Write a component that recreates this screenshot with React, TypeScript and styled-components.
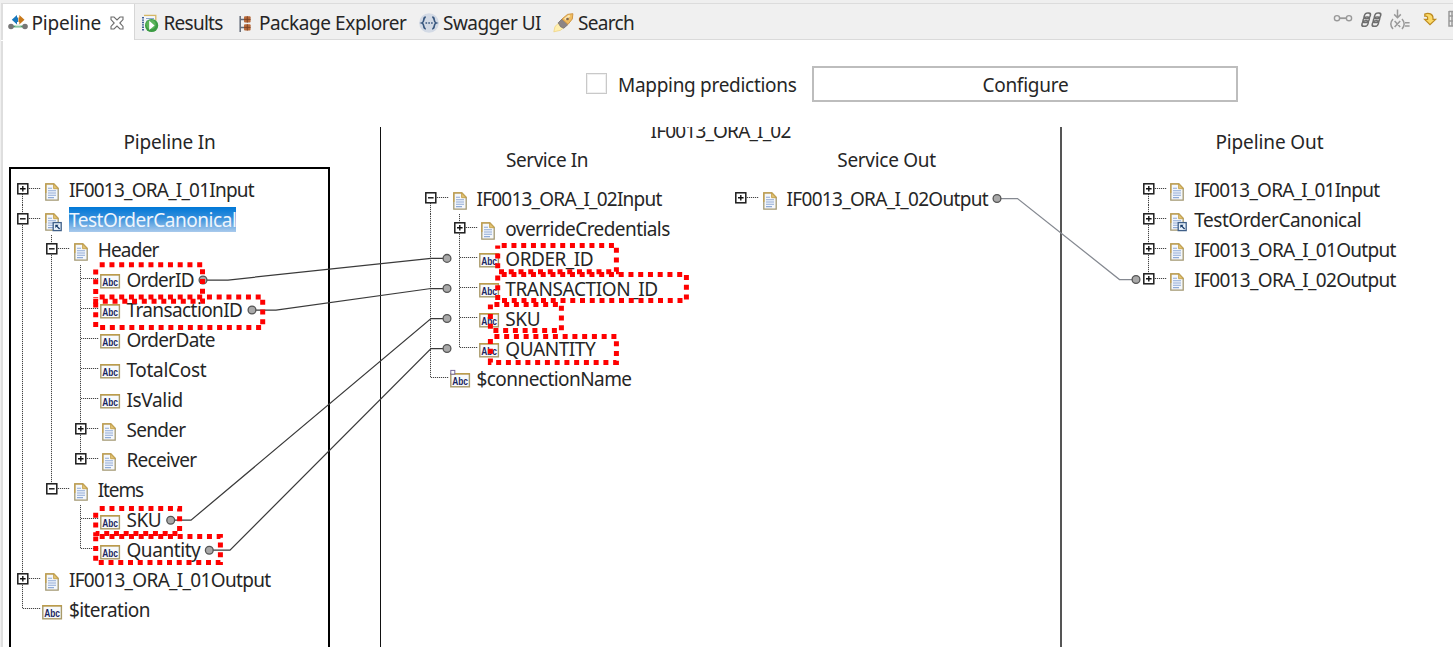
import React, { useLayoutEffect, useRef, useState } from "react";
import styled, { createGlobalStyle, css } from "styled-components";

const Global = createGlobalStyle`
  html, body { margin: 0; padding: 0; background: #fff; overflow: hidden; }
  body { font-family: "Noto Sans", "Open Sans", sans-serif; font-size: 19px; color: #262626; }
  * { box-sizing: border-box; }
  svg { display: block; flex: none; }
`;

/* ---------- text ---------- */

const TextBox = styled.span<{ $w: number }>`
  display: inline-block;
  width: ${(p) => p.$w}px;
  white-space: pre;
  flex: none;
`;

/* Text tracked so that it fills exactly the given width. */
function Fit({ w, children }: { w: number; children: string }) {
  const ref = useRef<HTMLSpanElement>(null);
  const [spacing, setSpacing] = useState(0);
  useLayoutEffect(() => {
    if (ref.current) {
      ref.current.style.letterSpacing = "0px";
      const natural = ref.current.getBoundingClientRect().width;
      setSpacing((w - natural) / children.length);
    }
  }, [w, children]);
  return (
    <TextBox $w={w}>
      <span ref={ref} style={{ letterSpacing: spacing }}>{children}</span>
    </TextBox>
  );
}

/* ---------- page frame ---------- */

const Page = styled.div`
  position: relative;
  width: 1453px;
  height: 647px;
  overflow: hidden;
  padding-left: 1px;
  background: #f0f0f0;
`;

const Frame = styled.div`
  height: 100%;
  border-left: 2px solid #dedede;
  background: #fff;
  display: flex;
  flex-direction: column;
`;

const TabBar = styled.div`
  display: flex;
  height: 40px;
  flex: none;
  margin-left: -2px;
  border-bottom: 1px solid #dadada;
  border-top: 3px solid #efefef;
  background: linear-gradient(#dcdcdc 1px, #f0f0f0 1px);
`;

const Tab = styled.div<{ $active?: boolean; $gap: number; $pad: number }>`
  display: flex;
  align-items: center;
  gap: ${(p) => p.$gap}px;
  padding: 4px 0 0 ${(p) => p.$pad}px;
  line-height: 32px;
  ${(p) =>
    p.$active &&
    css`
      width: 134px;
      margin-top: 1px;
      padding-top: 2px;
      height: 36px;
      background: #fff;
      border-left: 2px solid #dedede;
      border-right: 1px solid #d6d6d6;
      box-shadow: 0 1px 0 #fff;
    `}
`;

const CloseButton = styled.span`
  margin-left: 5px;
`;

const ToolIcons = styled.div`
  display: flex;
  align-items: flex-start;
  margin-left: auto;
  padding-top: 4px;
`;

const Options = styled.div`
  display: flex;
  align-items: center;
  flex: none;
  height: 87px;
  padding-left: 583px;
`;

const CheckBox = styled.span`
  width: 21px;
  height: 21px;
  border: 1px solid #c9c9c9;
  box-shadow: inset 0 0 0 1px #f0f0f0;
  margin-right: 11px;
`;

const OptionLabel = styled.label`
  padding-top: 2px;
`;

const ConfigureButton = styled.button`
  display: flex;
  align-items: center;
  justify-content: center;
  width: 426px;
  height: 36px;
  margin: 0 0 0 15.4px;
  padding: 2px 0 0 1px;
  border: 2px solid #bdbdbd;
  background: #fff;
  font: inherit;
  color: inherit;
`;

const Columns = styled.div`
  flex: 1;
  min-height: 0;
  display: grid;
  grid-template-columns: 377px 680px 1fr;
`;

const Column = styled.section<{ $line?: string; $pad?: number }>`
  min-width: 0;
  overflow: hidden;
  display: flex;
  flex-direction: column;
  padding-left: ${(p) => p.$pad ?? 0}px;
  border-left: ${(p) => p.$line ?? "0"};
`;

const Heading = styled.div<{ $left?: number; $h?: number; $up?: number; $w?: string }>`
  flex: none;
  line-height: 30px;
  height: ${(p) => p.$h ?? 28}px;
  width: ${(p) => p.$w ?? "100%"};
  margin-top: ${(p) => -(p.$up ?? 0)}px;
  padding-left: ${(p) => p.$left ?? 0}px;
  text-align: ${(p) => (p.$left ? "left" : "center")};
`;

const FocusPanel = styled.div`
  flex: 1;
  width: 321px;
  border: solid #000;
  border-width: 2px 2px 0;
  padding: 5.5px 0 0 6.4px;
`;

const ServicePair = styled.div`
  display: grid;
  grid-template-columns: 332px 1fr;
`;

const TreeArea = styled.div<{ $left: number; $top: number }>`
  padding: ${(p) => p.$top}px 0 0 ${(p) => p.$left}px;
`;

/* ---------- tree ---------- */

const STEP = 28.75;
const dotsV = "repeating-linear-gradient(to bottom, #444 0 1px, #dedede 1px 2px)";
const dotsH = "repeating-linear-gradient(to right, #444 0 1px, #dedede 1px 2px)";

const Row = styled.div`
  display: flex;
  align-items: flex-start;
  height: 30.05px;
`;

const Guide = styled.span<{ $on: boolean }>`
  flex: none;
  width: ${STEP}px;
  height: 100%;
  background: ${(p) => (p.$on ? `${dotsV} 5px 0 / 1px 100% no-repeat` : "none")};
`;

const Elbow = styled.span<{ $from: number; $to: string }>`
  flex: none;
  width: 24px;
  height: 100%;
  padding-top: 8px;
  background: ${dotsH} 6px 13px / 18px 1px no-repeat,
    ${dotsV} 5px ${(p) => p.$from}px / 1px ${(p) => p.$to} no-repeat;
`;

const IconSlot = styled.span<{ $kind: Kind }>`
  flex: none;
  width: 27.5px;
  padding: ${(p) => (p.$kind === "abc" || p.$kind === "abcOpt" ? "9.5px 0 0 1px" : "8px 0 0 3.5px")};
`;

const Label = styled.span<{ $selected?: boolean }>`
  line-height: 30px;
  ${(p) =>
    p.$selected &&
    css`
      line-height: 26px;
      height: 25px;
      margin-top: 2px;
      color: #eef5fc;
      background: linear-gradient(#0078d7, #2f8cdb 40%, #a9caec);
    `}
`;

type Kind = "doc" | "ref" | "abc" | "abcOpt";
type Node = {
  name: string;
  w: number;
  kind: Kind;
  box?: "plus" | "minus";
  selected?: boolean;
  kids?: Node[];
};

function Toggle({ open }: { open: boolean }) {
  return (
    <svg width="12" height="12" viewBox="0 0 12 12">
      <rect x="0.8" y="0.8" width="10" height="10" fill="#fff" stroke="#1c1c1c" strokeWidth="1.5" />
      <path d={open ? "M3 5.8h5.6" : "M3 5.8h5.6M5.8 3v5.6"} stroke="#111" strokeWidth="1.4" />
    </svg>
  );
}

function DocIcon({ linked }: { linked?: boolean }) {
  return (
    <svg width="18" height="19" viewBox="0 0 18 19">
      <path d="M.8.8h8l4.4 4.7v11.7H.8z" fill="#f4f7fb" stroke="#a39872" strokeWidth="1.3" />
      <path d="M.8 10V.8h8l4.4 4.7" fill="none" stroke="#c3a04c" strokeWidth="1.3" />
      <path d="M8.6.9v4.8h4.6z" fill="#e3c477" stroke="#c3a04c" strokeWidth=".9" />
      <path d="M3 5.3h4M3 7.7h8M3 10h8M3 12.3h8M3 14.6h6" stroke="#8faad6" strokeWidth="1.1" />
      {linked && (
        <>
          <rect x="8.2" y="9.6" width="8" height="8" fill="#eaf3fb" stroke="#3f5f88" strokeWidth="1.3" />
          <path d="M10.3 11.7h3.4l-3.4 3.4z" fill="#173a68" />
          <path d="M11 12.4l3.6 3.6" stroke="#173a68" strokeWidth="1.3" />
        </>
      )}
    </svg>
  );
}

const AbcText = styled.text`
  font: bold 11px "Liberation Sans", sans-serif;
  fill: #1b2760;
`;

function AbcIcon({ optional }: { optional?: boolean }) {
  return (
    <svg width="21" height="15" viewBox="0 0 21 15" overflow="visible">
      <rect x=".8" y=".8" width="18.6" height="13" fill="#f7f9fc" stroke="#a99a69" strokeWidth="1.4" />
      <path d="M.2.8h19.8" stroke="#bf9a40" strokeWidth="1.2" />
      <AbcText x="2.2" y="12" textLength="15.8" lengthAdjust="spacingAndGlyphs">Abc</AbcText>
      {optional && <rect x=".8" y="-2.6" width="4" height="3.8" fill="#fff" stroke="#74659a" />}
    </svg>
  );
}

function Branch({ nodes, guides = [] }: { nodes: Node[]; guides?: boolean[] }) {
  return (
    <>
      {nodes.map((n, i) => {
        const last = i === nodes.length - 1;
        const start = guides.length === 0 && i === 0 ? 13 : 0;
        return (
          <React.Fragment key={n.name}>
            <Row>
              {guides.map((on, g) => (
                <Guide key={g} $on={on} />
              ))}
              <Elbow $from={start} $to={last ? `${14 - start}px` : "100%"}>
                {n.box && <Toggle open={n.box === "minus"} />}
              </Elbow>
              <IconSlot $kind={n.kind}>
                {n.kind === "abc" || n.kind === "abcOpt" ? (
                  <AbcIcon optional={n.kind === "abcOpt"} />
                ) : (
                  <DocIcon linked={n.kind === "ref"} />
                )}
              </IconSlot>
              <Label $selected={n.selected}>
                <Fit w={n.w}>{n.name}</Fit>
              </Label>
            </Row>
            {n.kids && <Branch nodes={n.kids} guides={[...guides, !last]} />}
          </React.Fragment>
        );
      })}
    </>
  );
}

const pipelineIn: Node[] = [
  { name: "IF0013_ORA_I_01Input", w: 185, kind: "doc", box: "plus" },
  {
    name: "TestOrderCanonical", w: 167.5, kind: "ref", box: "minus", selected: true,
    kids: [
      {
        name: "Header", w: 61, kind: "doc", box: "minus",
        kids: [
          { name: "OrderID", w: 67.5, kind: "abc" },
          { name: "TransactionID", w: 116, kind: "abc" },
          { name: "OrderDate", w: 88.5, kind: "abc" },
          { name: "TotalCost", w: 80, kind: "abc" },
          { name: "IsValid", w: 56.5, kind: "abc" },
          { name: "Sender", w: 59, kind: "doc", box: "plus" },
          { name: "Receiver", w: 70, kind: "doc", box: "plus" },
        ],
      },
      {
        name: "Items", w: 45.5, kind: "doc", box: "minus",
        kids: [
          { name: "SKU", w: 35, kind: "abc" },
          { name: "Quantity", w: 74, kind: "abc" },
        ],
      },
    ],
  },
  { name: "IF0013_ORA_I_01Output", w: 201.5, kind: "doc", box: "plus" },
  { name: "$iteration", w: 81, kind: "abc" },
];

const serviceIn: Node[] = [
  {
    name: "IF0013_ORA_I_02Input", w: 185, kind: "doc", box: "minus",
    kids: [
      { name: "overrideCredentials", w: 164.5, kind: "doc", box: "plus" },
      { name: "ORDER_ID", w: 88, kind: "abc" },
      { name: "TRANSACTION_ID", w: 152.5, kind: "abc" },
      { name: "SKU", w: 35, kind: "abc" },
      { name: "QUANTITY", w: 90, kind: "abc" },
    ],
  },
  { name: "$connectionName", w: 155, kind: "abcOpt" },
];

const serviceOut: Node[] = [{ name: "IF0013_ORA_I_02Output", w: 201.5, kind: "doc", box: "plus" }];

const pipelineOut: Node[] = [
  { name: "IF0013_ORA_I_01Input", w: 185, kind: "doc", box: "plus" },
  { name: "TestOrderCanonical", w: 167, kind: "ref", box: "plus" },
  { name: "IF0013_ORA_I_01Output", w: 201.5, kind: "doc", box: "plus" },
  { name: "IF0013_ORA_I_02Output", w: 201.5, kind: "doc", box: "plus" },
];

/* ---------- mapping wires and highlights over the trees ---------- */

const Overlay = styled.svg`
  position: absolute;
  inset: 0;
  pointer-events: none;
`;

const wires = [
  { pts: [[203, 280], [228, 280], [431, 258.4], [447, 258.4]], color: "#3a3a3a" },
  { pts: [[252, 310], [276, 310], [431, 288.5], [447, 288.5]], color: "#3a3a3a" },
  { pts: [[170.7, 520.2], [191, 520.2], [431, 318.5], [447, 318.5]], color: "#3a3a3a" },
  { pts: [[209.3, 550.2], [230, 550.2], [431, 348.5], [447, 348.5]], color: "#3a3a3a" },
  { pts: [[997, 198.5], [1017.5, 198.5], [1119.5, 279.5], [1136, 279.5]], color: "#858991" },
];

const highlights = [
  [95.7, 264.8, 202.5, 301.3],
  [95.7, 297, 262.7, 327.4],
  [95.7, 508.4, 179.6, 533.6],
  [95.7, 536.5, 220.4, 562.4],
  [497.7, 245.4, 616.4, 271.8],
  [497.7, 274.5, 686.4, 300.4],
  [490.4, 304.6, 561.4, 330.6],
  [490.4, 336.6, 616.4, 362.6],
];

function Mappings() {
  return (
    <Overlay width="1453" height="647">
      {wires.map((w, i) => (
        <g key={i}>
          <polyline points={w.pts.map((p) => p.join(",")).join(" ")} fill="none" stroke={w.color} strokeWidth="1.25" />
          {[w.pts[0], w.pts[3]].map(([x, y]) => (
            <circle key={x} cx={x} cy={y} r="3.9" fill="#a9a9a9" stroke="#555" strokeWidth="1.3" />
          ))}
        </g>
      ))}
      {highlights.map(([x1, y1, x2, y2], i) => (
        <rect key={i} x={x1} y={y1} width={x2 - x1} height={y2 - y1} fill="none" stroke="#fe0000" strokeWidth="5" strokeDasharray="5 4.75" strokeDashoffset="-4" />
      ))}
    </Overlay>
  );
}

/* ---------- tab and toolbar icons ---------- */

const PipelineIcon = () => (
  <svg width="20" height="16" viewBox="0 0 20 16">
    <path d="M3 11.5h14" stroke="#4ba36a" strokeWidth="1.8" />
    <circle cx="3" cy="11.5" r="2.8" fill="#777" />
    <circle cx="17" cy="11.5" r="2.8" fill="#777" />
    <path d="M7 11.5l1.5-2h3l1.5 2z" fill="#d4e9d9" />
    <path d="M3.8 4.8L9 0v2.5h1v4.6H9v2.5z" fill="#1778bd" />
    <path d="M16.5 4.8L11.3 0v2.5h-.8v4.6h.8v2.5z" fill="#c8791b" />
  </svg>
);

const CloseIcon = () => (
  <svg width="14" height="14" viewBox="0 0 14 14">
    <path d="M1 1h3l3 3 3-3h3v2.6L9.8 7l3.2 3.4V13h-3l-3-3-3 3H1v-2.6L4.2 7 1 3.6z" fill="#fff" stroke="#6d6d6d" strokeWidth="1.1" />
  </svg>
);

const ResultsIcon = () => (
  <svg width="18" height="19" viewBox="0 0 18 19">
    <path d="M3 1.4h11.8v5" fill="none" stroke="#d5b765" strokeWidth="1.3" />
    <path d="M3 3h11v12H3z" fill="#f4f7fb" />
    <path d="M2 3v14" stroke="#3d5f97" strokeWidth="2" strokeDasharray="1.4 1" />
    <path d="M5 4.5h8M5 7.2h3" stroke="#8da6ce" />
    <circle cx="10.6" cy="11.5" r="6.6" fill="#3b9b43" />
    <circle cx="10" cy="10.5" r="4.8" fill="#5bb45c" />
    <path d="M8.2 6.8l5.4 4.6-5.4 4.5z" fill="#fff" />
  </svg>
);

const PackageIcon = () => (
  <svg width="13" height="17" viewBox="0 0 13 17">
    <path d="M1.2 1v16M1.2 4.5H5M1.2 12.5H5" stroke="#626a78" strokeWidth="1.5" fill="none" />
    <rect x="5" y="1.2" width="6.6" height="6.4" rx="1" fill="#b86a3b" />
    <rect x="5" y="9.2" width="6.6" height="6.4" rx="1" fill="#b86a3b" />
    <path d="M8.3 1.2v6.4M8.3 9.2v6.4M5 4.4h6.6M5 12.4h6.6" stroke="#7b4326" strokeWidth=".9" />
  </svg>
);

const SwaggerIcon = () => (
  <svg width="20" height="20" viewBox="0 0 20 20">
    <circle cx="10" cy="10" r="9.8" fill="#d3dae5" />
    <path d="M6.8 4.2C3.4 4.2 6.2 8.8 2.9 10c3.3 1.2.5 5.8 3.9 5.8M13.2 4.2c3.4 0 .6 4.6 3.9 5.8-3.3 1.2-.5 5.8-3.9 5.8" fill="none" stroke="#38577f" strokeWidth="1.7" />
    <path d="M6.5 10h7.3" stroke="#38577f" strokeWidth="1.6" strokeDasharray="1.6 1.2" />
  </svg>
);

const SearchIcon = () => (
  <svg width="21" height="20" viewBox="0 0 21 20">
    <path d="M.8 18.8L2 13.5l4-3.8 5 4.8-3.5 2.8z" fill="#fff0b0" stroke="#eed078" strokeWidth=".7" />
    <path d="M5.2 9.8L9 6l6 5.5-4.2 3.7-3.2-1.4z" fill="#8d8584" stroke="#77706d" strokeWidth=".8" />
    <path d="M9 6l5.5-4.6 5.4-.7L19.3 6 15 11.4z" fill="#f0bd62" stroke="#cf9543" />
    <path d="M11.7 6.2l5-3.7" stroke="#fbe8b5" strokeWidth="2" />
    <circle cx="14.5" cy="6" r="1.3" fill="#7d6654" />
  </svg>
);

const ToolbarDrawing = () => (
  <svg width="120" height="28" viewBox="1333 5 120 28">
    <g fill="none" stroke="#999" strokeWidth="1.4">
      <circle cx="1337" cy="16.2" r="2.6" />
      <circle cx="1349" cy="16.2" r="2.6" />
      <path d="M1339.6 16.2h6.8" strokeWidth="1.8" />
    </g>
    <g fill="none" stroke="#6d6d6d" strokeWidth="1.5">
      {[1363.5, 1373.8].map((x) => (
        <g key={x} transform={`translate(${x} 10.3) skewX(-16)`}>
          <rect x="1.8" y=".8" width="6" height="5.6" rx="2.6" />
          <rect x="1.8" y="4.6" width="6" height="5.6" rx="2.6" />
          <rect x="1.8" y="8.4" width="6" height="5.6" rx="2.6" />
        </g>
      ))}
    </g>
    <g fill="none" stroke="#999" strokeWidth="1.5">
      <path d="M1397.5 7.5v8M1394.2 12.4l3.3 3.3 3.3-3.3" />
      <path d="M1393 17c-2.8 3.2-2.8 6.8 0 10M1402 17c2.8 3.2 2.8 6.8 0 10M1394.6 19l5.6 6M1400.2 19l-5.6 6M1405 20.8h4.6M1405 24h4.6" />
    </g>
    <path d="M1424.8 12c4-1.6 8.2 0 8.2 4v1.4h2.6l-5.6 5.2-5.4-5.2h3v-1.6c0-1.2-1-2-2.8-1.6z" fill="#fbd967" stroke="#bd8b22" strokeWidth="1.2" />
    <g stroke="#999" fill="none">
      <path d="M1449 9.5h6M1449 9v15h6M1449 14h6M1449 19h6M1452 9v15" strokeWidth="1.5" />
    </g>
  </svg>
);

export default function App() {
  return (
    <Page>
      <Global />
      <Frame>
        <TabBar>
          <Tab $active $gap={4} $pad={4.5}>
            <PipelineIcon />
            <Fit w={69.5}>Pipeline</Fit>
            <CloseButton>
              <CloseIcon />
            </CloseButton>
          </Tab>
          <Tab $gap={4.5} $pad={6}>
            <ResultsIcon />
            <Fit w={59}>Results</Fit>
          </Tab>
          <Tab $gap={7.5} $pad={16}>
            <PackageIcon />
            <Fit w={147.5}>Package Explorer</Fit>
          </Tab>
          <Tab $gap={4.5} $pad={12}>
            <SwaggerIcon />
            <Fit w={98}>Swagger UI</Fit>
          </Tab>
          <Tab $gap={4} $pad={12}>
            <SearchIcon />
            <Fit w={56}>Search</Fit>
          </Tab>
          <ToolIcons>
            <ToolbarDrawing />
          </ToolIcons>
        </TabBar>
        <Options>
          <CheckBox />
          <OptionLabel>
            <Fit w={178.5}>Mapping predictions</Fit>
          </OptionLabel>
          <ConfigureButton>
            <Fit w={86}>Configure</Fit>
          </ConfigureButton>
        </Options>
        <Columns>
          <Column $pad={6}>
            <Heading $h={40} $w="321px">
              <Fit w={92}>Pipeline In</Fit>
            </Heading>
            <FocusPanel>
              <Branch nodes={pipelineIn} />
            </FocusPanel>
          </Column>
          <Column $line="1px solid #111">
            <Heading $up={11.4} $h={29}>
              <Fit w={140}>IF0013_ORA_I_02</Fit>
            </Heading>
            <ServicePair>
              <div>
                <Heading>
                  <Fit w={82}>Service In</Fit>
                </Heading>
                <TreeArea $left={44} $top={11}>
                  <Branch nodes={serviceIn} />
                </TreeArea>
              </div>
              <div>
                <Heading>
                  <Fit w={98.5}>Service Out</Fit>
                </Heading>
                <TreeArea $left={22} $top={11}>
                  <Branch nodes={serviceOut} />
                </TreeArea>
              </div>
            </ServicePair>
          </Column>
          <Column $line="2px solid #555">
            <Heading $h={40} $left={153.4}>
              <Fit w={108}>Pipeline Out</Fit>
            </Heading>
            <TreeArea $left={80.8} $top={7.5}>
              <Branch nodes={pipelineOut} />
            </TreeArea>
          </Column>
        </Columns>
      </Frame>
      <Mappings />
    </Page>
  );
}
